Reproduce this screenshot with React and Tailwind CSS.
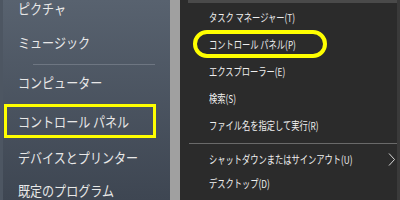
const rightItems = [
  'タスク マネージャー(T)',
  'コントロール パネル(P)',
  'エクスプローラー(E)',
  '検索(S)',
  'ファイル名を指定して実行(R)',
];

const font = { fontFamily: '"Noto Sans CJK JP", "Noto Sans", sans-serif' };

const L = ({ children }) => (
  <span className="inline-block origin-left scale-x-[0.86] whitespace-nowrap">{children}</span>
);
const R = ({ children }) => (
  <span className="inline-block origin-left scale-x-[0.75] whitespace-nowrap">{children}</span>
);

export default function App() {
  return (
    <div className="flex h-[200px] w-[400px] overflow-hidden" style={font}>
      <div className="relative w-[170px] shrink-0 bg-gradient-to-b from-[#58626f] to-[#3e4652] border-l-[3px] border-[#4d5662]">
        <div className="pl-[15px] text-[14px] text-[#e8e8e8]">
          <div className="flex h-[25px] items-start leading-[17px]"><L>ピクチャ</L></div>
          <div className="flex h-[35px] items-center"><L>ミュージック</L></div>
        </div>
        <div className="ml-[30px] mr-[15px] mt-[4px] h-px bg-[#6e7682]" />
        <div className="pl-[15px] text-[14px] text-[#e8e8e8]">
          <div className="flex h-[34px] items-center"><L>コンピューター</L></div>
          <div className="flex h-[44px] items-center"><L>コントロール パネル</L></div>
          <div className="flex h-[28px] items-center"><L>デバイスとプリンター</L></div>
          <div className="flex h-[38px] items-center"><L>既定のプログラム</L></div>
        </div>
        <div className="absolute left-[1px] top-[104px] h-[34px] w-[152px] border-[3px] border-[#ffff00]" />
      </div>
      <div className="w-[10px] shrink-0 bg-[#a0a0a0]" />
      <div className="relative min-w-0 flex-1 bg-[#2b2b2b] border-r-[3px] border-[#3a3a3a] text-[11px] text-[#efefef]">
        <div className="ml-[8px] h-[3px] bg-[#4a4a4a]" />
        <div className="pl-[29px] pt-[1px]">
          {rightItems.map((t) => (
            <div key={t} className="flex h-[27px] items-center">
              <R>{t}</R>
            </div>
          ))}
        </div>
        <div className="ml-[9px] mt-[4px] h-px bg-[#6a6a6a]" />
        <div className="pl-[29px] pt-[2px]">
          <div className="flex h-[26px] items-center pr-[2px]">
            <div className="min-w-0 flex-1 overflow-visible">
              <R>シャットダウンまたはサインアウト(U)</R>
            </div>
            <svg className="shrink-0" width="7" height="13" viewBox="0 0 7 13" fill="none" stroke="#d8d8d8" strokeWidth="1">
              <path d="M1 0.5l5.5 6-5.5 6" />
            </svg>
          </div>
          <div className="flex h-[22px] items-center"><R>デスクトップ(D)</R></div>
        </div>
        <div className="absolute left-[13px] top-[30px] h-[28px] w-[134px] rounded-full border-[4px] border-[#ffff00]" />
      </div>
    </div>
  );
}
